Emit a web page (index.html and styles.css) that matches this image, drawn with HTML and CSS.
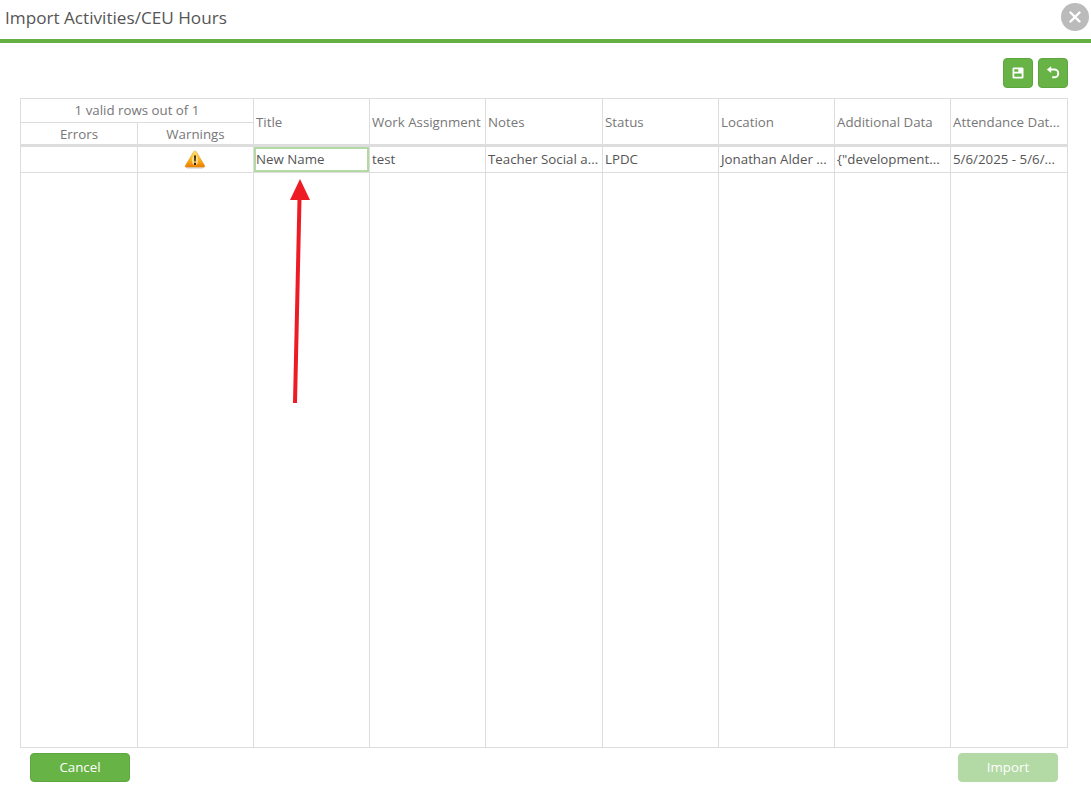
FILE: index.html
```html
<!DOCTYPE html>
<html lang="en">
<head>
    <meta charset="UTF-8">
    <title>Import Activities/CEU Hours</title>
    <link rel="stylesheet" href="styles.css">
</head>
<body>
    <div class="header">
        <span class="header-title">Import Activities/CEU Hours</span>
        <button class="close-btn" aria-label="Close">
            <svg width="12" height="12" viewBox="0 0 12 12"><path d="M1.5 1.5l9 9M10.500 1.500l-9 9" stroke="#fff" stroke-width="2.400" stroke-linecap="round"/></svg>
        </button>
    </div>

    <div class="toolbar">
        <button class="icon-btn" aria-label="Save">
            <svg width="12" height="12" viewBox="0 0 12 12"><path fill-rule="evenodd" d="M1.800 0.500h8.400a1.300 1.300 0 0 1 1.300 1.300v8.400a1.300 1.300 0 0 1-1.300 1.300H1.800a1.300 1.300 0 0 1-1.300-1.300V1.800a1.300 1.300 0 0 1 1.300-1.300zM2.300 6.500v3.200h7.400V6.500zM2.300 2.200v2.500h4V2.200z" fill="#fff"/></svg>
        </button>
        <button class="icon-btn" aria-label="Undo">
            <svg width="14" height="14" viewBox="0 0 14 14"><path d="M4.500 3.600h3.900a3.800 3.800 0 0 1 0 7.700H6.200" fill="none" stroke="#fff" stroke-width="2"/><path d="M0.800 3.600l4.400-3.300v6.600z" fill="#fff"/></svg>
        </button>
    </div>

    <div class="grid-wrap">
        <table class="grid">
            <colgroup>
                <col class="col-wide"><col class="col-std"><col class="col-std"><col class="col-std">
                <col class="col-wide"><col class="col-std"><col class="col-std"><col class="col-std"><col class="col-wide">
            </colgroup>
            <thead>
                <tr class="head-top">
                    <th colspan="2" class="center">1 valid rows out of 1</th>
                    <th rowspan="2">Title</th>
                    <th rowspan="2">Work Assignment</th>
                    <th rowspan="2">Notes</th>
                    <th rowspan="2">Status</th>
                    <th rowspan="2">Location</th>
                    <th rowspan="2">Additional Data</th>
                    <th rowspan="2">Attendance Dat...</th>
                </tr>
                <tr class="head-sub">
                    <th class="center">Errors</th>
                    <th class="center">Warnings</th>
                </tr>
            </thead>
            <tbody>
                <tr class="data-row">
                    <td></td>
                    <td class="center">
                        <svg class="warn" width="22" height="19" viewBox="0 0 22 19">
                            <defs>
                                <linearGradient id="warn-fill" x1="0" y1="0" x2="0" y2="1">
                                    <stop offset="0" stop-color="#ffe778"/>
                                    <stop offset=".55" stop-color="#fbb017"/>
                                    <stop offset="1" stop-color="#ea7a00"/>
                                </linearGradient>
                            </defs>
                            <path d="M11 1c.6 0 1 .3 1.300.8l8.300 13.700c.5.900 0 1.800-1 1.800H2.400c-1 0-1.500-.9-1-1.800L9.700 1.800c.3-.5.700-.8 1.300-.8z" fill="url(#warn-fill)" stroke="#e19a2c" stroke-width=".6"/>
                            <ellipse cx="11" cy="10.500" rx="3.200" ry="5" fill="#ffe9a8" opacity=".75"/>
                            <path d="M10 5.500h2l-.3 6h-1.400zM10 12.800h2v2.100h-2z" fill="#33240a"/>
                            <path d="M3 18h16" stroke="#c9c9c9" stroke-width="1"/>
                        </svg>
                    </td>
                    <td class="cell-active">New Name</td>
                    <td>test</td>
                    <td>Teacher Social a...</td>
                    <td>LPDC</td>
                    <td>Jonathan Alder ...</td>
                    <td>{"development...</td>
                    <td>5/6/2025 - 5/6/...</td>
                </tr>
                <tr class="filler-row">
                    <td></td><td></td><td></td><td></td><td></td><td></td><td></td><td></td><td></td>
                </tr>
            </tbody>
        </table>
    </div>

    <div class="footer">
        <button class="btn">Cancel</button>
        <button class="btn btn-disabled">Import</button>
    </div>

    <!-- annotation arrow on top of the grid -->
    <svg class="arrow" width="30" height="230" viewBox="0 0 30 230">
        <path d="M5 224L9.500 20" stroke="#ed1c24" stroke-width="4" fill="none"/>
        <path d="M10 0L20 21H0z" fill="#ed1c24"/>
    </svg>
</body>
</html>
```

FILE: styles.css
```css
* {
    box-sizing: border-box;
}
body {
    margin: 0;
    height: 787px;
    overflow: hidden;
    background: #fff;
    font-family: "Open Sans", "Noto Sans", sans-serif;
    font-size: 13.3px;
    color: #555;
    position: relative;
}
button {
    font-family: inherit;
    cursor: pointer;
}
.header {
    height: 43px;
    border-bottom: 4px solid #67b045;
    padding: 0 2px 0 5px;
    display: flex;
    justify-content: space-between;
    align-items: flex-start;
}
.header-title {
    font-size: 17.15px;
    line-height: 36px;
    color: #555;
}
.close-btn {
    width: 28px;
    height: 28px;
    margin-top: 3px;
    border: none;
    border-radius: 50%;
    background: #bbb;
    padding: 0;
    display: flex;
    align-items: center;
    justify-content: center;
}
.toolbar {
    display: flex;
    justify-content: flex-end;
    gap: 5px;
    padding: 15px 23px 0 0;
    height: 55px;
}
.icon-btn {
    width: 30px;
    height: 30px;
    background: #67b346;
    border: 1px solid #5ea63f;
    border-radius: 4px;
    padding: 0;
    display: flex;
    align-items: center;
    justify-content: center;
}
.grid-wrap {
    margin: 0 23px 0 20px;
    height: 650px;
}
.grid {
    width: 1048px;
    height: 650px;
    table-layout: fixed;
    border-collapse: separate;
    border-spacing: 0;
    border-top: 1px solid #ddd;
    border-left: 1px solid #ddd;
}
.col-wide {
    width: 117px;
}
.col-std {
    width: 116px;
}
th, td {
    padding: 0 2px;
    border-right: 1px solid #ddd;
    white-space: nowrap;
    overflow: hidden;
    text-align: left;
    font-weight: 400;
}
th {
    color: #777;
    border-bottom: 1px solid #ddd;
}
.center {
    text-align: center;
}
thead th[rowspan] {
    border-bottom: 3px solid #ddd;
}
.head-top th {
    height: 24px;
    padding-bottom: 2px;
}
.head-top th[rowspan] {
    padding-bottom: 0;
}
.head-sub th {
    height: 24px;
    border-bottom: 3px solid #ddd;
}
.data-row td {
    height: 26px;
    color: #555;
    padding-bottom: 2px;
    border-bottom: 1px solid #ddd;
}
.warn {
    display: block;
    margin: 1px auto 0;
    position: relative;
    left: -1px;
}
.data-row .cell-active {
    box-shadow: inset 0 0 0 2px #b3d9a5;
    padding-left: 2px;
}
.filler-row td {
    border-bottom: 1px solid #ddd;
}
.footer {
    display: flex;
    justify-content: space-between;
    padding: 5px 33px 0 30px;
}
.btn {
    width: 100px;
    height: 29px;
    background: #67b346;
    border: 1px solid #5ea63f;
    border-radius: 4px;
    color: #fff;
    font-size: 13.3px;
    padding: 0 0 2px;
}
.btn-disabled {
    background: #b3d9a5;
    border-color: #b3d9a5;
    cursor: default;
}
.arrow {
    position: absolute;
    left: 290px;
    top: 179px;
}
```
